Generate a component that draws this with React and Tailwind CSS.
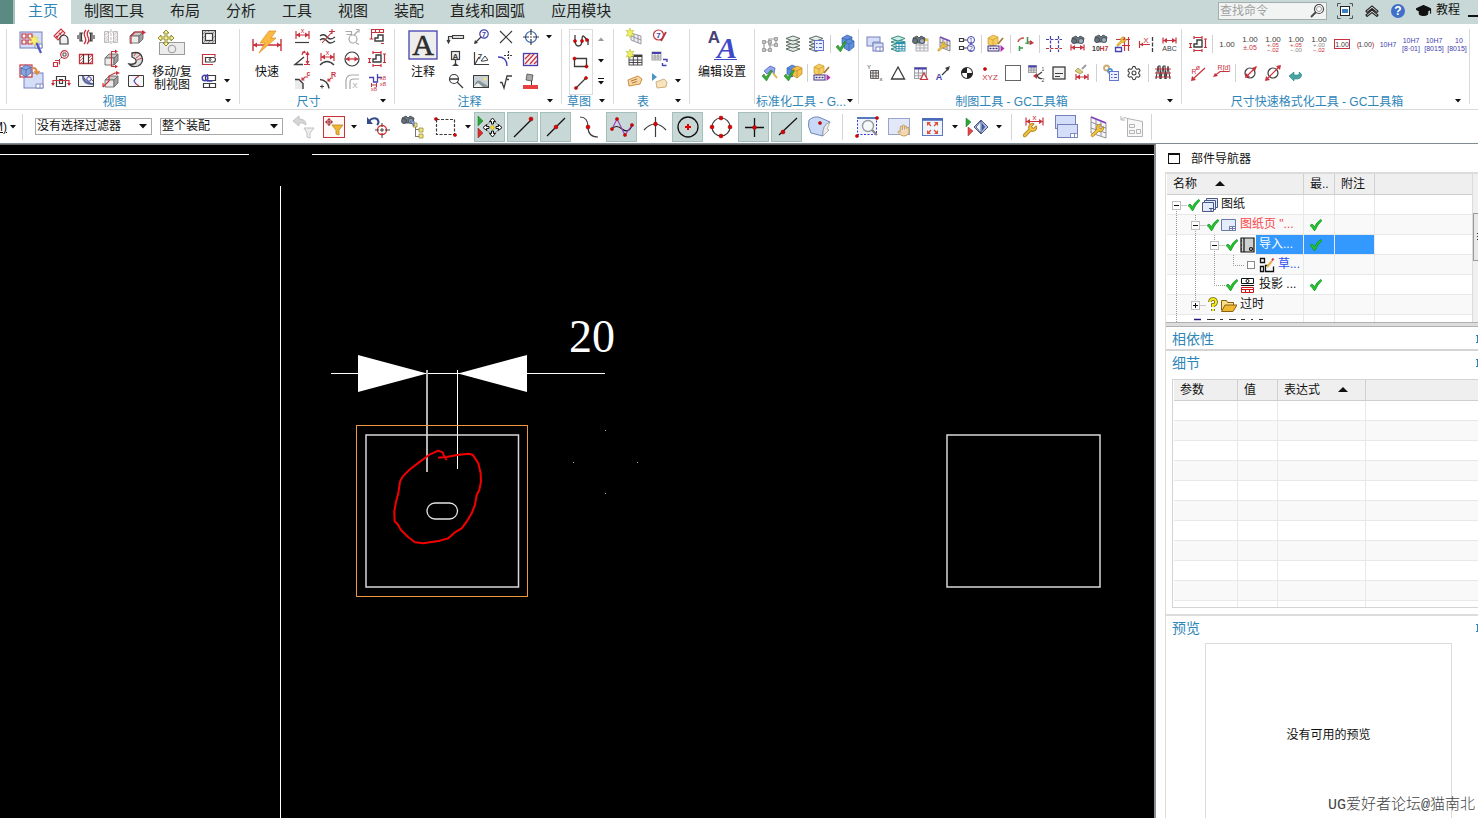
import React, { useState } from 'react';
import { Settings, Wrench, Hand, GraduationCap } from 'lucide-react';

const K = '#3c3c3c';
const R = '#c8323c';
const B = '#4440b0';
const G = '#a8a8a8';

const Dim = ({ x1 = 2, x2 = 18, y = 10, h = 4, w = 1.2 }) => (
    <g stroke={R} strokeWidth={w}>
        <path d={`M${x1} ${y - h}V${y + h}M${x2} ${y - h}V${y + h}M${x1} ${y}H${x2}`} />
        <path fill={R} stroke="none" d={`M${x1} ${y}l4 -2.5v5zM${x2} ${y}l-4 -2.5v5z`} />
    </g>
);

const Dot = ({ x, y, r = 1.6 }) => <circle cx={x} cy={y} r={r} fill="#e00000" stroke="#8a1010" strokeWidth=".5" />;

const T = ({ x = 10, y = 10, c = K, s = 8, b, children }) => (
    <text x={x} y={y} fill={c} stroke="none" fontSize={s} fontWeight={b ? 700 : 400} textAnchor="middle" fontFamily="Liberation Sans, sans-serif">
        {children}
    </text>
);

const Bino = ({ x = 0, y = 0 }) => (
    <g transform={`translate(${x} ${y})`} stroke="#3b444c" strokeWidth=".8">
        <path fill="#6d767e" d="M1 2l4-2 2 2 2-2 4 2-1 5H2z" />
        <circle cx="3" cy="5" r="2.5" fill="#69737b" />
        <circle cx="10" cy="5" r="2.5" fill="#9fb0ba" />
    </g>
);

const Check = ({ x = 0, y = 0 }) => (
    <path transform={`translate(${x} ${y})`} fill="#3aa83a" stroke="#1b7a1b" strokeWidth=".5" d="M0 6l2-2 2 3 5-7 1.500 1-6 10z" />
);

const Grid = ({ x, y, w, h, c = '#999', head = B }) => (
    <g transform={`translate(${x} ${y})`} stroke={c} strokeWidth=".9">
        <rect width={w} height={h} fill="#f5f5fb" />
        <path d={`M0 ${h * 0.5}H${w}M0 ${h * 0.75}H${w}M${w / 3} 0V${h}M${(w * 2) / 3} 0V${h}`} />
        <path stroke={head} strokeWidth="2" d={`M0 1H${w}`} />
    </g>
);

const Sheet = ({ x, y, w, h }) => (
    <g transform={`translate(${x} ${y})`}>
        <rect width={w} height={h} fill="#d5def8" stroke="#7480bc" strokeWidth="1" />
        <path stroke="#7480bc" strokeWidth=".9" fill="#fff" d={`M${w - 7} ${h - 4}h7v4h-7zM${w - 3} ${h - 4}v4`} />
    </g>
);

const Spanner = ({ x, y, s = 12 }) => (
    <Wrench x={x} y={y} width={s} height={s} fill="#f2c53a" stroke="#b88a28" strokeWidth={1.6} />
);

const Cube = ({ x = 0, y = 0, c = '#5f8fdc', d = '#3a62ac' }) => (
    <g transform={`translate(${x} ${y})`} stroke={d} strokeWidth=".7">
        <path fill={c} d="M0 3l5-3 5 2v6l-5 4-5-3z" />
        <path d="M0 3l5 2 5-3M5 5v7" />
    </g>
);

const Part3d = () => (
    <g stroke="#6a6a6a" strokeWidth=".9">
        <path fill="#c8c8c8" d="M4 9l4-4h9l-4 4z" />
        <path fill="#ececec" d="M4 9h9v7H4z" />
        <path fill="#a0a0a0" d="M13 9l4-4v7l-4 4z" />
    </g>
);

const Sheaf = ({ c = '#4f5a55', f = '#e4ede6' }) => (
    <g stroke={c} fill={f} strokeWidth=".9">
        <path d="M3 15l7-2.500 7 2.500-7 2.500z" />
        <path d="M3 11.500l7-2.500 7 2.500-7 2.500z" />
        <path d="M3 8l7-2.500L17 8l-7 2.500z" />
        <path d="M3 4.500L10 2l7 2.500L10 7z" />
    </g>
);

const BaseDim = () => (
    <g>
        <path stroke={K} strokeWidth="1.4" d="M6 13v-3h3V6h5v7z" />
        <path stroke={R} strokeWidth="1.200" d="M6 3.500h8M6 2v3M14 2v3M6 16.500h8M6 15v3M14 15v3M2.500 9.500v4M1 9.500h3M1 13.500h3M17.500 5v8.500M16 5h3M16 13.500h3" />
    </g>
);

const Pack = () => (
    <g>
        <Cube x={2} y={1} c="#f4cc60" d="#c89a30" />
        <path stroke="#a87a3a" strokeWidth="1.800" d="M17 4l-5 6" />
        <rect x="2" y="12" width="11" height="5" stroke="#3a2878" fill="#fff" />
        <path stroke="#3a2878" strokeWidth="1.500" strokeDasharray="2 1" d="M3.500 14.500h8" />
        <path fill="#b030b0" stroke="none" d="M14.500 11l4 3.500-4 3.500z" />
    </g>
);

const Star = ({ x = 0, y = 0 }) => (
    <path transform={`translate(${x} ${y})`} fill="#eef060" stroke="#b8c038" strokeWidth=".6" d="M5 0l1 3 3-1-2 3 2 2-3 .5L5 10 4 7.500 1 8l2-3-2-3 3 1z" />
);

const icons = {
    // view group
    newView: (
        <>
            <Sheet x={1} y={2} w={22} h={16} />
            <path stroke={R} fill="#fff" strokeWidth="1.200" d="M3 4h4v4H3zM9 4h4v4H9zM3 10h4v4H3zM9 10h4v4H9z" />
            <path stroke="#5058c0" strokeWidth="2.200" d="M17 12l5 11" />
            <path fill="#f6f070" stroke="#dccc40" strokeWidth=".5" d="M15 5l1.500 3 3-1-2 3 3 2-3.500.5-1 3.500-2-3.500-3.500.5 2.500-3-2.500-3 3.500 1z" />
        </>
    ),
    baseView: (
        <>
            <Sheet x={5} y={9} w={19} h={15} />
            <rect x="1" y="1" width="12" height="12" fill="#fff" stroke={R} strokeWidth="1.200" />
            <Cube x={2} y={1} c="#8aa4de" />
            <path stroke="#e08a40" strokeWidth="1.800" d="M14 4q4 0 4 5M15.500 7l2.500 3 2.500-3" />
        </>
    ),
    projView: (
        <>
            <path stroke={R} strokeWidth="1.100" d="M3 9l7-7 4 4-7 7zM5 11l7-7M5 9l2 2M8 6l2 2" />
            <path fill="#f0f0f0" stroke={K} strokeWidth="1.200" d="M9 17v-6q1-3 4-3 4 1 4 5v4z" />
        </>
    ),
    detail: (
        <>
            <circle cx="13.500" cy="5.500" r="3.800" stroke={R} strokeWidth="1.200" />
            <path stroke={K} strokeWidth=".9" d="M12 4h3v3h-3z" />
            <path stroke={K} strokeDasharray="2 1" d="M11 8l-4 4" />
            <path stroke={R} strokeWidth="1.200" d="M2.500 13.500h4v4h-4zM4 11.500h4.500v4" />
        </>
    ),
    section: (
        <>
            <path stroke={K} strokeWidth="1.200" d="M5.500 5.500h9v10h-9zM8.500 8.500h3v4h-3z" />
            <path stroke={R} strokeWidth="1.200" d="M2 14v-4.500h16V14" />
            <path fill={R} stroke="none" d="M0 12h4l-2 3zM16 12h4l-2 3z" />
        </>
    ),
    breakView: (
        <>
            <path stroke={K} strokeWidth="1.200" d="M7 6H4v8h3M2 8v4M13 6h3v8h-3M18 8v4M5.500 6v8M14.500 6v8" />
            <path stroke={R} strokeWidth="1.300" d="M10 3q-3 3-1 7t-1 7M13 3q-3 3-1 7t-1 7" />
        </>
    ),
    halfSec: (
        <>
            <path stroke={R} strokeWidth="1.300" d="M3.500 5.500h13v9h-13z" />
            <path stroke={R} strokeWidth=".8" d="M4 9l3-3M4 12l3-3M5 14l2-2M13 9l3-3M13 12l3-3M14 14l2-2" />
            <path stroke={K} strokeWidth="1.200" d="M7.500 5v10M12.500 5v10" />
        </>
    ),
    breakout: (
        <>
            <path stroke={K} fill="#f2f2f2" d="M2.500 4.500h15v11h-15z" />
            <path stroke="#5a68a8" strokeWidth="2.200" d="M7 5q0 8 10 8" />
            <path stroke={K} strokeWidth=".8" d="M8 7l7 6M12 5l5 5" />
            <circle cx="13" cy="8" r="2.200" fill="#fff" stroke={B} />
        </>
    ),
    revolved: (
        <g stroke="#bdbdbd">
            <path fill="#ececec" d="M3.500 4.500h4v11h-4zM12.500 4.500h4v11h-4z" />
            <path stroke="#dfbcc2" strokeWidth=".8" d="M4 8l3-3M4 12l3-3M4 15l3-3M13 8l3-3M13 12l3-3M13 15l3-3" />
            <path d="M7 5h6M7 15h6M10 2v16" strokeDasharray="3 1" />
        </g>
    ),
    cutA: (
        <>
            <Part3d />
            <path stroke={R} strokeWidth="1.200" d="M10.500 18V2.500M10 2.500h5M10 17.500h5" />
            <path fill={R} stroke="none" d="M14 .5l3 2-3 2zM14 15.500l3 2-3 2z" />
        </>
    ),
    cutB: (
        <>
            <Part3d />
            <path stroke={R} strokeWidth="1.200" d="M2 16l6-6V5l6-3h3M2 16v-4" />
            <path fill={R} stroke="none" d="M15 0l4 2-4 2z" />
        </>
    ),
    cutC: (
        <>
            <Part3d />
            <path stroke={R} strokeWidth="1.200" d="M5 17V9l4-4h9" />
            <path fill={R} stroke="none" d="M16 3l4 2.500-4 2.500z" />
        </>
    ),
    isoCut: (
        <>
            <path stroke={K} strokeWidth="1.300" fill="#ddd" d="M6 4q8-2 10 4t-4 9q-6 2-9-2 6 1 7-2t-4-5z" />
            <path stroke={R} strokeWidth=".9" d="M10 4L8 7M14 6l-4 3M16 9l-5 2" />
        </>
    ),
    chevView: (
        <>
            <path stroke={K} fill="#f6f6f6" d="M2.500 4.500h15v11h-15z" />
            <path stroke={R} strokeWidth="1.200" d="M13 5l-3 2M13 15l-3-2" />
            <path stroke={B} strokeWidth="1.200" d="M10 7l-2 3 2 3" />
        </>
    ),
    move: (
        <>
            <rect x="1.500" y="12.500" width="25" height="12" fill="#ececec" stroke="#9a9a9a" />
            <circle cx="14" cy="19" r="3.800" stroke="#999" />
            <path fill="#f6f090" stroke="#86802c" strokeWidth=".9" d="M8 0l3 3H9v4h4V5l3 3-3 3V9H9v4h2l-3 3-3-3h2V9H3v2L0 8l3-3v2h4V3H5z" />
        </>
    ),
    frame: (
        <>
            <rect x="3.500" y="3.500" width="13" height="13" stroke={K} fill="#d4d4d4" />
            <path stroke="#777" strokeWidth=".7" d="M4 7l3-3M4 16l3-3M13 7l3-3M13 16l3-3M4 11l2-2M14 11l2-2M9 5l1-1M9 16l2-2" />
            <rect x="6.500" y="6.500" width="7" height="7" stroke={K} fill="#fff" strokeWidth="1.200" />
        </>
    ),
    update: (
        <>
            <path stroke={R} strokeWidth="1.200" d="M16 8V5.500H3.500v10H14" />
            <path stroke={K} strokeWidth="1.200" fill="#fff" d="M6.500 8.500h8q2 0 2 2t-2 2.500h-8z" />
            <circle cx="11" cy="10.500" r="1" stroke={K} />
        </>
    ),
    align: (
        <>
            <path stroke={K} strokeWidth="1.200" d="M6.500 4.500h10v5h-10zM4.500 12.500h12v4h-12zM10.500 12v5" />
            <circle cx="6" cy="7" r="2.800" stroke={B} strokeWidth="1.500" />
            <path stroke={B} strokeWidth="1.300" d="M8.500 3v7h5" />
        </>
    ),
    // dimension group
    rapid: (
        <>
            <Dim x1={1} x2={29} y={15} h={6} w={1.4} />
            <path fill="#fab940" stroke="#dc8820" strokeWidth=".7" d="M17 1h7l-5 7h5L7 23l6-10H8z" />
        </>
    ),
    linear: (
        <>
            <Dim x1={4} x2={17} y={8} h={4} />
            <T x={10.5} y={6} c={R} s={7}>x</T>
            <path stroke={K} strokeWidth="1.200" d="M3 15.500h14" />
        </>
    ),
    curveDim: (
        <>
            <path stroke={K} strokeWidth="1.300" d="M3 9q4-3 7 1t8 0M3 13q4-3 7 1t8 0" />
            <path stroke={R} strokeWidth="1.100" d="M5 16L16 4M12 4.500h6M15 2v5" />
        </>
    ),
    dimGray: (
        <g stroke={G} strokeWidth="1.200">
            <circle cx="11" cy="12" r="4" />
            <path d="M3.500 4.500h6v3h-5M12 8l4-4M14 2.500h3v3M14 16l3 1.500" />
        </g>
    ),
    ordinate: (
        <>
            <path stroke={K} strokeWidth="1.400" d="M8 14v-3h3V8h5v6z" />
            <path stroke={R} strokeWidth="1.100" d="M4.500 2.500h12v3h-12zM8.500 2.500v3M12.500 2.500v3M4.500 5.500V12M2.500 12h4M14 16.500h3" />
        </>
    ),
    angular: (
        <>
            <path stroke={K} strokeWidth="1.400" d="M12 8l-9 7.500h8" />
            <path stroke={R} strokeWidth="1.200" d="M15.500 4v11M12 15.500h6M11 4l2-2M10 6l1-3 3 1" />
            <path fill={R} stroke="none" d="M13.500 6h4l-2-4zM13.500 12h4l-2 3.500z" />
        </>
    ),
    chord: (
        <>
            <path stroke={K} strokeWidth="1.400" d="M3 16q7-7 14 0" />
            <Dim x1={4} x2={17} y={8} h={4} />
            <T x={10.5} y={6} c={R} s={7}>x</T>
        </>
    ),
    diameter: (
        <>
            <circle cx="10" cy="10" r="7" stroke={K} strokeWidth="1.200" />
            <path stroke={R} strokeWidth="1.300" d="M4 10h12" />
            <path fill={R} stroke="none" d="M3.500 10l4-2.500v5zM16.500 10l-4-2.500v5z" />
        </>
    ),
    baseDim: <BaseDim />,
    chamfer: (
        <>
            <path fill="#ebebeb" stroke="none" d="M3 9h4l4 4v5H3z" />
            <path stroke={K} strokeWidth="1.400" d="M3 8.500h4l4 4V18" />
            <path stroke={R} strokeWidth="1.100" d="M10 9l3-3h3M10 6.500V9h2.500" />
            <T x={16.5} y={5} c={R} s={7} b>c</T>
        </>
    ),
    radius: (
        <>
            <path stroke={K} strokeWidth="1.400" d="M3 8.500q8 1 9 9" />
            <path stroke={K} d="M3 15.500h4M5 13.500v4" />
            <path stroke={R} strokeWidth="1.100" d="M11 10l3-3h2M11 7.500V10h2.500" />
            <T x={16.5} y={6} c={R} s={7} b>R</T>
        </>
    ),
    thick: (
        <g stroke={G} strokeWidth="1.200">
            <path d="M4 18V9q1-5 6-5h7M8 18v-7q0-3 4-3h5" />
            <T x={13} y={17} c={G} s={8}>X</T>
        </g>
    ),
    arcLen: (
        <>
            <path stroke={B} strokeWidth="1.300" d="M2 6.500h5M6.500 6v5h4V3M10 6.500h5" />
            <path stroke={R} d="M4.500 12v4M9.500 12v4M4.500 14h5" />
            <T x={16} y={9} c={R} s={6}>x8</T>
            <T x={16} y={15} c={R} s={6}>x8</T>
            <T x={7} y={20} c={R} s={6}>x8</T>
        </>
    ),
    // annotation group
    note: (
        <>
            <rect x="1" y="1" width="28" height="28" fill="#ededed" stroke={B} strokeWidth="1.300" />
            <text x="15" y="25" fill="#2c2c2c" stroke="#2c2c2c" strokeWidth=".6" fontSize="30" textAnchor="middle" fontFamily="Liberation Serif, serif">A</text>
        </>
    ),
    gdt: <path stroke={K} strokeWidth="1.200" fill="#ddd" d="M6.500 8.500h11v3h-11zM2.500 15V9.500h4M1 13l1.500 3L4 13" />,
    balloon: (
        <>
            <circle cx="13" cy="7" r="4.200" stroke={B} strokeWidth="1.200" fill="#fff" />
            <T x={13} y={9.5} c={B} s={7} b>7</T>
            <path stroke={K} strokeWidth="1.200" d="M10 10l-6 6" />
            <path fill={K} stroke="none" d="M3 17l1-4 3 3z" />
        </>
    ),
    cross: <path stroke={K} strokeWidth="1.200" d="M4 4l12 12M16 4L4 16" />,
    target: (
        <>
            <circle cx="10" cy="10" r="5.500" stroke="#2a5fb0" strokeWidth="1.200" />
            <path stroke={K} strokeWidth="1.200" d="M10 2v6M10 12v6M2 10h6M12 10h6M9 10h2" />
        </>
    ),
    datum: (
        <>
            <rect x="5.500" y="2.500" width="8" height="8" stroke={K} strokeWidth="1.200" fill="#eee" />
            <T x={9.5} y={9.5} s={8} b>A</T>
            <path stroke={K} strokeWidth="1.300" d="M9.500 11v5" />
            <path fill={K} stroke="none" d="M6 17l3.500-3 3.500 3z" />
        </>
    ),
    surface: (
        <>
            <path stroke={K} strokeWidth="1.200" d="M3.500 3v12.500H18M4 15l4-7" />
            <T x={9} y={10} s={8} b>7</T>
            <path stroke={K} d="M10 12l4-5 3 4-4 1z" />
        </>
    ),
    offsetC: (
        <>
            <path stroke={B} strokeWidth="1.300" d="M2 8q9 0 9 9" />
            <path stroke={K} strokeDasharray="2 1" strokeWidth="1.200" d="M12.500 2v9M8 6.500h9" />
        </>
    ),
    hatch: (
        <>
            <rect x="2.500" y="4.500" width="14" height="12" stroke={B} strokeWidth="1.300" fill="#fdf0f0" />
            <path stroke={R} strokeWidth="1.200" d="M4 10l5-5M4 15l9-10M9 15l7-8M13 15l3-3" />
        </>
    ),
    zoomSym: (
        <>
            <circle cx="8" cy="8" r="4.500" stroke={K} strokeWidth="1.200" />
            <path stroke={K} strokeWidth="1.300" d="M4 8h8M11 11l6 6" />
        </>
    ),
    image: (
        <>
            <rect x="2.500" y="4.500" width="15" height="12" stroke={K} fill="#c6d0d4" />
            <path fill="#8a969a" stroke="none" d="M3 15q3-7 6-5t8 5v1H3z" />
            <path fill="#eef2f4" stroke="none" d="M3 15l4-3 5 4H3z" />
            <circle cx="14" cy="8" r="1.500" fill="#f8e878" stroke="none" />
        </>
    ),
    rough: <path stroke={K} strokeWidth="1.300" d="M4 11.500h2l2 5.500 3-12h5M11 8.500h2" />,
    paint: (
        <>
            <path fill="#a8a8a8" stroke={K} strokeWidth=".7" d="M6 3l6 1-1 6-6-1z" />
            <path stroke={K} d="M10.500 10v4" />
            <path fill="#e84040" stroke="none" d="M2 14h15v4H2z" />
        </>
    ),
    // sketch
    spline: (
        <>
            <path stroke={K} strokeWidth="1.300" d="M4 4v5q0 6 3.500 6t3.500-6 2.500-3 3.500 3v5" />
            <Dot x={4} y={10} /><Dot x={11} y={10} /><Dot x={16} y={9} />
        </>
    ),
    rect: (
        <>
            <path stroke={K} strokeWidth="1.300" d="M3.500 6.500h12v8h-12z" />
            <Dot x={3.5} y={6.5} /><Dot x={15.5} y={14.5} />
        </>
    ),
    line: (
        <>
            <path stroke={K} strokeWidth="1.300" d="M5 15L15 5" />
            <Dot x={5} y={15} /><Dot x={15} y={5} />
        </>
    ),
    // tables
    tabNote: (<><path fill="#f0eef8" stroke="#888" strokeWidth=".8" d="M6 6l10 3v8L6 13zM9 7v7M13 8v8M6 9l10 4" /><Star x={0} y={1} /></>),
    tabBalloon: (
        <>
            <circle cx="8.500" cy="8" r="5" stroke={R} strokeWidth="1.200" />
            <T x={8.5} y={11} c={B} s={8} b>7</T>
            <path stroke="#b03a44" strokeWidth="1.800" d="M16 5l-5 9" />
        </>
    ),
    partsList: (<><Grid x={4} y={6} w={13} h={10} c={K} head={K} /><Star x={0} y={0} /></>),
    tabLink: (
        <>
            <Grid x={2} y={3} w={9} h={8} />
            <path stroke={B} strokeWidth="1.400" d="M13 10.500h4V13M12.500 17v-3M12.500 16.500h4" />
        </>
    ),
    tag: (
        <>
            <path fill="#f8d4a0" stroke="#cc9040" d="M3 9l10-4 4 3-2 5-11 2z" />
            <path stroke="#9a6428" strokeWidth=".8" d="M6 10l6-2M7 12l5-1.500" />
        </>
    ),
    tagPlay: (
        <>
            <path fill="#4a96c0" stroke="none" d="M2 2l5 4-5 4z" />
            <path fill="#f6e4c0" stroke="#d0b078" d="M6 11l8-3 3 3-1 5-9 1z" />
        </>
    ),
    editStyle: (
        <>
            <T x={7} y={13} c="#4a3f78" s={17} b>A</T>
            <text x="20" y="28" fill="#3f49c8" stroke="none" fontSize="30" fontWeight="700" fontStyle="italic" textAnchor="middle" fontFamily="Liberation Serif, serif">A</text>
            <path stroke="#3f49c8" d="M7 29.500h23" />
        </>
    ),
    // standardisation
    boxesGray: (
        <g stroke="#9a9a9a" strokeWidth="1.200">
            <path d="M4 8h6v8H4zM9 5h7v6H9z" />
            <path fill="#c4c4c4" strokeWidth=".9" d="M2.500 6.500h3v3h-3zM8.500 6.500h3v3h-3zM2.500 14.500h3v3h-3zM8.500 14.500h3v3h-3zM14.500 3.500h3v3h-3zM14.500 9.500h3v3h-3z" />
        </g>
    ),
    layers: <Sheaf />,
    layerSet: (
        <>
            <Sheaf />
            <rect x="8.500" y="6.500" width="9" height="10" fill="#eaf0ff" stroke="#6474d0" />
            <path stroke="#5264c8" d="M10 9.500h1.500M13 9.500h3M10 13.500h1.500M13 13.500h3" />
        </>
    ),
    chkBlue: (<><Cube x={7} y={1} /><Cube x={9} y={5} /><Check x={1} y={7} /></>),
    chkGreen: (
        <>
            <path fill="#94a6ee" stroke="#4858b8" strokeWidth=".7" d="M4 8l6-5 5 2-1 6-3-4-4 4z" />
            <path stroke="#d0b840" strokeWidth="1.800" d="M13 10l4 5" />
            <Check x={2} y={7} />
        </>
    ),
    chkGold: (<><Cube x={4} y={2} /><Cube x={9} y={3} c="#f6c04a" d="#b88828" /><Check x={1} y={7} /></>),
    pack: <Pack />,
    // drafting tools
    sheets: (<><Sheet x={2} y={3} w={13} h={9} /><Sheet x={8} y={9} w={10} h={8} /></>),
    layerTab: (<><Sheaf c="#2a8070" f="#c9eee6" /><Grid x={8} y={8} w={9} h={9} c="#2a90a8" head="#2a90a8" /></>),
    findTab: (<><Grid x={5} y={5} w={12} h={12} c="#aaa" head="#e8c030" /><Bino x={1} y={2} /></>),
    editTab: (
        <>
            <path fill="#ece8f6" stroke="#777" strokeWidth=".9" d="M6 3l10 4v10L6 13zM9 5v9M13 6v9M6 8l10 4" />
            <path stroke="#7850b8" strokeWidth="1.500" d="M6 3l10 4" />
            <Spanner x={3} y={7} s={11} />
        </>
    ),
    oneTwo: (
        <>
            <path stroke={K} strokeWidth="1.200" d="M2.500 4.500h4v3h-4zM2.500 12.500h4v3h-4zM6 6h4M6 14h4" />
            <circle cx="14" cy="6" r="3.500" stroke={B} /><circle cx="14" cy="14" r="3.500" stroke={B} />
            <T x={14} y={8.5} c={B} s={7}>1</T><T x={14} y={16.5} c={B} s={7}>2</T>
        </>
    ),
    axes: (
        <>
            <path stroke="#d05050" strokeWidth="1.500" d="M3 8q1-4 6-4M13 8h4" />
            <path fill={R} stroke="none" d="M15 6l4 3-4 2z" />
            <path stroke="#3a9a4a" strokeWidth="1.600" d="M12.500 3v6M4.500 17v-5M4 14h4" />
            <path stroke="#3a9a4a" strokeWidth="1" d="M10 9l5 1" />
        </>
    ),
    centre: (
        <g strokeWidth="1.200">
            <path stroke={B} strokeDasharray="3 1.500" d="M6.500 2v16M14.500 2v16M2 5.500h16" />
            <path stroke={R} strokeDasharray="3 1.500" d="M2 14.500h16" />
        </g>
    ),
    findDim: (<><Bino x={4} y={2} /><Dim x1={4} x2={17} y={13.5} h={3} /></>),
    findTol: (
        <>
            <Bino x={4} y={1} />
            <T x={6} y={17} s={7} b>10</T><T x={14} y={17} c={R} s={7} b>H7</T>
        </>
    ),
    editDim: (
        <>
            <path stroke={R} strokeWidth="1.200" d="M3 5.500h14M9 11.500h8M15.500 3v14M11.500 3v14" />
            <Spanner x={3} y={2} s={11} />
            <path stroke={B} strokeWidth="1.300" fill="#fff" d="M2.500 13.500h6v4h-6z" />
        </>
    ),
    xDim: (
        <>
            <path stroke={R} strokeWidth="1.200" d="M3.500 7v7M3.500 10.500H14" />
            <path fill={R} stroke="none" d="M4 10.500l3-2v4z" />
            <T x={10} y={9} c={R} s={8}>X</T>
            <path stroke={K} strokeDasharray="4 1.500" strokeWidth="1.300" d="M16.500 3v15" />
        </>
    ),
    abcDim: (<><Dim x1={4} x2={17} y={6.5} h={3} /><T x={10.5} y={17} s={7}>ABC</T></>),
    gridXY: (
        <>
            <path stroke="#555" strokeWidth=".9" fill="#f0e4e4" d="M5.500 7.500h8v8h-8zM5.500 10h8M5.500 13h8M8 7.500v8M11 7.500v8" />
            <T x={4} y={6} s={6}>Y</T><T x={16} y={18} s={6}>x</T>
        </>
    ),
    triangle: <path stroke={K} strokeWidth="1.300" d="M10 4l6.500 12h-13z" />,
    gridTri: (
        <>
            <Grid x={3.5} y={4.5} w={12} h={11} />
            <path stroke={R} fill="#fff" strokeWidth="1.200" d="M13 10l3.500 6.500h-7z" />
        </>
    ),
    arrowA: (
        <>
            <T x={5} y={17} c={B} s={9} b>A</T>
            <path stroke={K} strokeWidth="1.200" d="M8 12l7-7" />
            <path fill={K} stroke="none" d="M16 3l-5 2 3 3z" />
        </>
    ),
    cog: (
        <>
            <circle cx="10" cy="10" r="5.500" fill="#fff" stroke={K} strokeWidth="1.200" />
            <path fill="#222" stroke="none" d="M10 10V4.500a5.500 5.500 0 0 0-5.500 5.500zM10 10v5.500a5.500 5.500 0 0 0 5.500-5.500z" />
        </>
    ),
    xyz: (<><Dot x={5} y={6} /><T x={10} y={17} c={R} s={8}>XYZ</T></>),
    square: <rect x="2.500" y="2.500" width="15" height="15" stroke="#666" />,
    gridC: (
        <>
            <Grid x={2.5} y={2.5} w={8} h={7} />
            <path fill={R} stroke="none" d="M7 13l4-3v6z" />
            <path stroke={K} strokeWidth="1.200" d="M16 9l-5 3.500q2 4 5 3" />
            <T x={17} y={8} s={5}>1</T><T x={17} y={19} s={5}>2</T>
        </>
    ),
    noteBox: (
        <>
            <rect x="4" y="4" width="12" height="12" fill="#f1f1f1" stroke={K} strokeWidth="1.300" />
            <path stroke={K} d="M6 10.500h8M6 13.500h5" />
        </>
    ),
    brushDim: (
        <>
            <path fill="#dcd080" stroke="#9a8c48" strokeWidth=".7" d="M6 5l5 4-3 2-5-3z" />
            <path stroke="#999" strokeWidth="1.800" d="M10 6l4-4" />
            <Dim x1={4} x2={16} y={14} h={3} />
        </>
    ),
    gearsSet: (
        <>
            <circle cx="5.500" cy="5" r="2.500" stroke="#d0a870" strokeWidth="1.800" />
            <circle cx="9" cy="8" r="2" stroke="#4a98cc" strokeWidth="1.800" />
            <rect x="8.500" y="8.500" width="9" height="9" fill="#eaf0ff" stroke="#6474d0" />
            <path stroke="#5264c8" d="M10 11.500h1.500M13 11.500h3M10 14.500h1.500M13 14.500h3" />
        </>
    ),
    gear: <Settings x={2} y={2} width={16} height={16} stroke={K} strokeWidth={1.6} />,
    spring: (
        <>
            <path stroke={K} strokeWidth="1.100" d="M3 16l2-13 2 13M8 16l2-13 2 13M13 16l2-13 2 13M5 3h2l1 13M10 3h2l1 13" />
            <path stroke={R} strokeWidth="1.200" d="M2 6h16M2 10h16M2 14h16" />
        </>
    ),
    // quick dimension formats
    f1: <T y={13} s={8}>1.00</T>,
    f2: (<><T y={8} s={8}>1.00</T><T y={16} s={7} c={R}>±.05</T></>),
    f3: (<><T y={8} s={8}>1.00</T><T y={13} s={6} c={R}>+.05</T><T y={18} s={6} c={R}>−.02</T></>),
    f4: (<><T y={8} s={8}>1.00</T><T y={13} s={6} c={R}>+.05</T><T y={18} s={6} c="#888">−.00</T></>),
    f5: (<><T y={8} s={8}>1.00</T><T y={13} s={6} c="#888">+.00</T><T y={18} s={6} c={R}>−.02</T></>),
    f6: (<><rect x="2.500" y="5.500" width="15" height="9" stroke={R} /><T y={13} s={7}>1.00</T></>),
    f7: (<><T x={3} y={13} s={8} c={R}>(</T><T y={13} s={7}>1.00</T><T x={18} y={13} s={8} c={R}>)</T></>),
    f8: <T y={13} s={7} c={B}>10H7</T>,
    f9: (<><T y={9} s={7} c={B}>10H7</T><T y={17} s={7} c={B}>[8·01]</T></>),
    f10: (<><T y={9} s={7} c={B}>10H7</T><T y={17} s={7} c={B}>[8015]</T></>),
    f11: (<><T x={12} y={9} s={7} c={B}>10</T><T y={17} s={7} c={B}>[8015]</T></>),
    rPhi: (
        <>
            <path stroke={R} strokeWidth="1.200" d="M17 5L5 16" />
            <path fill={R} stroke="none" d="M3 18l1-5 4 4z" />
            <T x={6} y={11} c={R} s={7}>R</T><T x={10} y={7} c={R} s={7}>ø</T>
        </>
    ),
    rD: (
        <>
            <path stroke={R} strokeWidth="1.200" d="M18 8.500H9l-5 4" />
            <path fill={R} stroke="none" d="M2 14l2-4 3 3z" />
            <T x={13} y={7} c={R} s={7}>R[d]</T>
        </>
    ),
    dia1: (
        <>
            <circle cx="10" cy="10" r="5" stroke={K} strokeWidth="1.200" />
            <path stroke={R} strokeWidth="1.200" d="M7 13l9-9" />
            <path fill={R} stroke="none" d="M5 15l1-5 4 4zM17 3l-5 2 3 3z" />
        </>
    ),
    dia2: (
        <>
            <circle cx="10" cy="10" r="5" stroke={K} strokeWidth="1.200" />
            <path stroke={R} strokeWidth="1.200" d="M4 16L16 4" />
            <path fill={R} stroke="none" d="M2 18l1-5 4 4zM18 2l-5 1 4 4z" />
        </>
    ),
    back: <path fill="#48a4a4" stroke="#2c8080" strokeWidth=".6" d="M3 13l5-4v3h4q2-1 1-3 4 2 2 5-1 2-4 2H8v2z" />,
    // selection bar, drawn on a 24 grid
    undoFilter: (
        <g fill="#d6d6d6" stroke="#c2c2c2">
            <path d="M1 6l6-5v3q7 0 7 6-3-3-7-2v3z" />
            <path d="M12 13h10l-4 5v5l-3-1v-4z" fill="#ededed" />
        </g>
    ),
    filter: (
        <>
            <rect x="1.500" y="1.500" width="21" height="21" stroke={R} fill="#fff8f4" />
            <circle cx="7" cy="7" r="2.500" stroke={R} />
            <path stroke="#8a2028" d="M7 3v8M3 7h8" />
            <path fill="#f2b632" stroke="#b88420" strokeWidth=".8" d="M10 10h11l-4 5v5l-3-1v-4z" />
        </>
    ),
    reset: (
        <>
            <path stroke="#334a88" strokeWidth="2" d="M3 6q4-4 8-2 3 3 0 6" />
            <path fill="#334a88" stroke="none" d="M1 2v7h6z" />
            <circle cx="16" cy="15" r="4.500" stroke="#e03030" strokeWidth="1.300" />
            <path stroke={K} d="M16 8v4M16 18v5M9 15h4M19 15h5M14 15h4M16 13v4" />
        </>
    ),
    findTree: (
        <>
            <Bino x={1} y={1} />
            <path stroke="#777" d="M15.500 10v12M15 14.500h4M15 21.500h4" />
            <path fill="#f4e478" stroke="#9a8a40" strokeWidth=".8" d="M13 8h4v4h-4zM19 13h4v4h-4zM19 19h4v4h-4z" />
            <path fill="#a0b8e8" stroke="#445a9a" strokeWidth=".8" d="M10 6h4v5z" />
        </>
    ),
    lasso: (
        <>
            <path stroke={K} strokeDasharray="3 1.500" strokeWidth="1.200" d="M3.500 4.500h18v15h-18z" />
            <Dot x={3} y={4} /><Dot x={22} y={20} />
        </>
    ),
    snap: (
        <>
            <path fill="#28a838" stroke="#147020" strokeWidth=".5" d="M0 1l5 5-5 5z" />
            <path fill="#d83030" stroke="#901010" strokeWidth=".5" d="M0 13l5 5-5 5z" />
            <circle cx="14.500" cy="12.500" r="6" stroke="#888" />
            <path fill="#fff" stroke="#111" strokeWidth="1" d="M14.500 3l3 3.500h-2V9h-2V6.500h-2zM14.500 22l3-3.500h-2V16h-2v2.500h-2zM5 12.500l3.500-3v2H11v2H8.500v2zM24 12.500l-3.500-3v2H18v2h2.500v2z" />
            <circle cx="14.500" cy="12.500" r="1.800" fill="#f8dc20" stroke="#d0a818" strokeWidth=".6" />
        </>
    ),
    endPt: (<><path stroke="#111" strokeWidth="1.200" d="M3 22L20 5" /><Dot x={20} y={4} r={2} /></>),
    midPt: (<><path stroke="#111" strokeWidth="1.200" d="M3 21L21 3" /><Dot x={12} y={12} r={2} /></>),
    ctrlPt: (<><path stroke={K} strokeWidth="1.200" d="M3 2q8 0 8 10t10 10" /><Dot x={11} y={12} r={2} /></>),
    pole: (
        <>
            <path stroke="#111" strokeWidth="1.200" d="M2 14q4-5 10 0t10-3" />
            <path stroke="#a040c0" strokeWidth="1.200" d="M2 14l5-10 8 16 7-10" />
            <Dot x={2} y={14} /><Dot x={7} y={4} /><Dot x={15} y={20} /><Dot x={22} y={10} />
        </>
    ),
    isect: (<><path stroke={K} strokeWidth="1.200" d="M1 15q11-12 22 0M12.500 2v20" /><Dot x={12.5} y={9} r={2} /></>),
    arcCtr: (
        <>
            <circle cx="12" cy="12" r="10" stroke="#111" strokeWidth="1.300" />
            <path stroke="#e00000" strokeWidth="2" d="M12 9v6M9 12h6" />
        </>
    ),
    quad: (
        <>
            <circle cx="12" cy="12" r="9" stroke={K} strokeWidth="1.200" />
            <Dot x={12} y={3} r={2} /><Dot x={21} y={12} r={2} /><Dot x={12} y={21} r={2} /><Dot x={3} y={12} r={2} />
        </>
    ),
    exist: (<><path stroke="#111" strokeWidth="1.300" d="M3 12.500h19M12.500 3v19" /><Dot x={12.5} y={12.5} r={2} /></>),
    onCurve: (<><path stroke="#111" strokeWidth="1.200" d="M4 20L22 3" /><Dot x={8} y={17} r={2} /></>),
    onFace: (
        <>
            <path fill="#c9d8f4" stroke="#6a88b8" d="M1 5q6-5 12-2l9 4q-8 3-7 14L3 18Q-1 11 1 5z" />
            <path fill="#eee" stroke="#999" strokeWidth=".7" d="M15 21q-1-11 7-14-1 3-3 7l2 1z" />
            <Dot x={12} y={8} />
        </>
    ),
    fitSel: (
        <>
            <rect x="2.500" y="3.500" width="19" height="16" fill="#f0f4ff" stroke="#3838e0" strokeDasharray="2 1.500" />
            <path stroke="#5878c0" strokeWidth="2" d="M2 3h19" />
            <circle cx="13" cy="11" r="5.500" fill="#f6f9fa" stroke="#999" strokeWidth="1.400" />
            <path stroke="#888" strokeWidth="2.200" d="M17 15l5 5" />
            <Dot x={2} y={21} /><Dot x={22} y={3} />
        </>
    ),
    pan: (
        <>
            <rect x="1.500" y="3.500" width="21" height="16" fill="#e2e8f8" stroke="#98a4d0" />
            <Hand x={10} y={9} width={13} height={13} fill="#f4d8ac" stroke="#c09a60" strokeWidth={1.8} />
        </>
    ),
    fit: (
        <>
            <rect x="2.500" y="3.500" width="20" height="17" fill="#f0f4ff" stroke="#6078c0" />
            <path stroke="#4868b8" strokeWidth="2.500" d="M2 4.500h21" />
            <path stroke="#d85038" strokeWidth="1.300" d="M11 11L8 8M14 11l3-3M11 15l-3 3M14 15l3 3" />
            <path fill="#d85038" stroke="none" d="M7 7h4L7 11zM18 7h-4l4 4zM7 19h4l-4-4zM18 19h-4l4-4z" />
        </>
    ),
    orient: (
        <>
            <path fill="#28a838" stroke="#147020" strokeWidth=".5" d="M1 3l5 4-5 5z" />
            <path fill="#e04848" stroke="#a02020" strokeWidth=".5" d="M3 12l5 4-5 5z" />
            <path fill="#aebcdc" stroke="#4a588a" d="M9 12l7-7 7 7-7 7z" />
            <path fill="#f0f4fe" stroke="#33437a" strokeWidth=".8" d="M16 6v12l-5-6z" />
            <path fill="#3a5aa8" stroke="none" d="M17 8v8l3-4z" />
        </>
    ),
    wrenchDim: (<><Dim x1={5} x2={22} y={6.5} h={4} /><T x={13.5} y={5} c={R} s={8}>x</T><Spanner x={1} y={7} s={16} /></>),
    twoSheets: (<><Sheet x={1.5} y={0.5} w={20} h={13} /><Sheet x={3.5} y={9.5} w={20} h={13} /></>),
    wrenchTab: (
        <>
            <path fill="#f6f4fc" stroke="#888" strokeWidth=".9" d="M4 2l15 6v15L4 18zM9 4v15M14 6v15M4 7l15 6M4 13l15 5" />
            <path stroke="#8040c0" strokeWidth="1.800" d="M4 2l15 6" />
            <Spanner x={3} y={8} s={15} />
        </>
    ),
    sheetGray: (
        <g stroke="#b4b4b4" fill="#f8f8f8">
            <path d="M7.500 3.500l15 3v15h-15zM9.500 9.500h5v3h-5zM9.500 15.500h5v3h-5zM16.500 14.500h4v4h-4z" />
            <path d="M1 5q3-4 7-1M1 1v4h4" fill="none" />
        </g>
    ),
};

const Icon = ({ name, size = 20 }) => (
    <svg width={size} height={size} viewBox={`0 0 ${size} ${size}`} fill="none" strokeWidth="1" overflow="visible" aria-hidden="true">
        {icons[name]}
    </svg>
);

const Down = ({ className = '' }) => (
    <svg width="6" height="4" viewBox="0 0 6 4" className={className} aria-hidden="true">
        <path d="M0 0h6L3 3.500z" fill="currentColor" />
    </svg>
);

const More = ({ label = '更多' }) => (
    <button aria-label={label} className="w-3 h-[22px] flex items-center justify-center shrink-0">
        <Down />
    </button>
);

const Divider = () => <div className="w-px my-[5px] bg-[#d9d9d9] shrink-0" />;

const Group = ({ title, width, left, children }) => (
    <section className={`flex flex-col shrink-0 pt-[2px] ${width}`}>
        <div className="h-[66px] flex">{children}</div>
        {title && (
            <div className="h-[17px] pr-[5px] flex items-center">
                <span className={`flex-1 pt-[2px] text-[#2e86b8] leading-4 whitespace-nowrap ${left ? 'pl-px' : 'text-center'}`}>{title}</span>
                <button aria-label={`${title} 选项`} className="w-3 h-4 flex items-center justify-center">
                    <Down />
                </button>
            </div>
        )}
    </section>
);

const Column = ({ names }) => (
    <div className="flex flex-col">
        {names.map((n) => (
            <button key={n} aria-label={n} className="w-[25px] h-[22px] flex items-center justify-center">
                <Icon name={n} />
            </button>
        ))}
    </div>
);

// "|" in a row stands for a thin separator
const Row = ({ names }) => (
    <div className="flex h-[29px] items-center">
        {names.map((n, i) =>
            n === '|' ? (
                <div key={i} className="w-[6px] flex justify-center">
                    <div className="w-px h-[18px] bg-[#d0d0d0]" />
                </div>
            ) : (
                <button key={i} aria-label={n} className="w-[23px] h-6 flex items-center justify-center">
                    <Icon name={n} />
                </button>
            )
        )}
    </div>
);

const BigButton = ({ icon, size, width, children }) => (
    <button className={`flex flex-col items-center pt-1 shrink-0 ${width}`}>
        <span className="h-9 flex items-start justify-center">
            <Icon name={icon} size={size} />
        </span>
        <span className="leading-[13px] whitespace-nowrap">{children}</span>
    </button>
);

const tabs = ['主页', '制图工具', '布局', '分析', '工具', '视图', '装配', '直线和圆弧', '应用模块'];

const TopBar = ({ active, onChange }) => (
    <header className="h-6 flex bg-[#c8d8d6]">
        <div className="w-[15px] bg-[#5b8a82] border-r-2 border-[#a9c1bd] shrink-0" />
        <nav className="flex text-[15px]">
            {tabs.map((t) => (
                <button
                    key={t}
                    onClick={() => onChange(t)}
                    className={`px-[13px] h-6 pb-[3px] leading-5 whitespace-nowrap ${t === active ? 'bg-white text-[#2e86b8]' : 'text-[#222]'}`}
                >
                    {t}
                </button>
            ))}
        </nav>
        <div className="ml-auto flex items-start pt-[2px]">
            <label className="w-[109px] h-[18px] flex items-center bg-[#f2f4f4] border border-[#a5adad]">
                <input type="text" aria-label="查找命令" placeholder="查找命令" className="w-0 flex-1 pl-px leading-4 outline-none placeholder:text-[#a0a0a0]" />
                <svg width="18" height="16" viewBox="0 0 18 16" fill="none" stroke="#444" strokeWidth="1.200" aria-hidden="true">
                    <circle cx="11" cy="6" r="4.500" fill="#fff" />
                    <circle cx="11" cy="6" r="2.500" stroke="#999" strokeWidth="1" />
                    <path d="M8 9l-5 5" strokeWidth="1.800" />
                </svg>
            </label>
            <button aria-label="全屏" className="ml-2.5 h-[18px] flex items-center">
                <svg width="16" height="16" viewBox="0 0 16 16" fill="none" stroke="#555">
                    <path d="M.5 3.500v-3h3M12.500.5h3v3M15.500 12.500v3h-3M3.500 15.500h-3v-3" />
                    <rect x="3.500" y="3.500" width="9" height="9" fill="#fff" stroke="#222" />
                    <path d="M5 6h6v4H5z" fill="#3a80c8" stroke="none" />
                </svg>
            </button>
            <button aria-label="折叠功能区" className="ml-3 h-[18px] flex items-center">
                <svg width="14" height="12" viewBox="0 0 14 12" fill="#fff" stroke="#222" strokeWidth="1.100">
                    <path d="M1 6l6-5 6 5-1 1.500-5-4-5 4zM1 10l6-5 6 5-1 1.500-5-4-5 4z" />
                </svg>
            </button>
            <button aria-label="帮助" className="ml-3 h-[18px] flex items-center">
                <span className="w-[14px] h-[14px] rounded-full bg-[#3f6fc8] text-white font-bold leading-[14px]">?</span>
            </button>
            <button className="ml-2.5 h-4 flex items-center gap-1 text-[#111]">
                <GraduationCap size={17} fill="#111" strokeWidth={1.5} />
                教程
            </button>
            <button aria-label="最小化" className="ml-2 w-[10px] h-[15px] border-b-2 border-[#111]" />
        </div>
    </header>
);

const Ribbon = () => (
    <div className="h-[86px] flex pl-[6px] bg-white border-b border-[#d9d9d9] overflow-hidden">
        <Divider />
        <Group title="视图" width="w-[232px]">
            <div className="ml-2 w-[33px] pt-1 flex flex-col gap-2">
                <button aria-label="新建图纸页" className="pl-1"><Icon name="newView" size={26} /></button>
                <button aria-label="基本视图" className="pl-1"><Icon name="baseView" size={26} /></button>
            </div>
            <Column names={['projView', 'detail', 'section']} />
            <Column names={['breakView', 'halfSec', 'breakout']} />
            <Column names={['revolved', 'cutA', 'cutB']} />
            <Column names={['cutC', 'isoCut', 'chevView']} />
            <BigButton icon="move" size={28} width="w-12">移动/复<br />制视图</BigButton>
            <Column names={['frame', 'update', 'align']} />
            <div className="flex items-end"><More /></div>
        </Group>
        <Divider />
        <Group title="尺寸" width="w-[154px]">
            <BigButton icon="rapid" size={30} width="ml-[5px] w-11">快速</BigButton>
            <Column names={['linear', 'angular', 'chamfer']} />
            <Column names={['curveDim', 'chord', 'radius']} />
            <Column names={['dimGray', 'diameter', 'thick']} />
            <Column names={['ordinate', 'baseDim', 'arcLen']} />
        </Group>
        <Divider />
        <Group title="注释" width="w-[166px]">
            <BigButton icon="note" size={30} width="ml-2 w-10">注释</BigButton>
            <Column names={['gdt', 'datum', 'zoomSym']} />
            <Column names={['balloon', 'surface', 'image']} />
            <Column names={['cross', 'offsetC', 'rough']} />
            <Column names={['target', 'hatch', 'paint']} />
            <More />
        </Group>
        <Divider />
        <Group title="草图" width="w-[51px]">
            <div className="ml-[7px] mt-[3px] w-6 h-[66px] flex flex-col border border-[#dcdcdc]">
                {['spline', 'rect', 'line'].map((n) => (
                    <button key={n} aria-label={n} className="h-[22px] flex items-center justify-center">
                        <Icon name={n} />
                    </button>
                ))}
            </div>
            <div className="ml-[2px] pt-[3px] flex flex-col">
                <button aria-label="向上" className="w-3 h-[22px] flex items-center justify-center text-[#999]"><Down className="rotate-180" /></button>
                <More label="向下" />
                <button aria-label="展开" className="w-3 h-[22px] flex flex-col items-center justify-center gap-[2px]">
                    <span className="w-[6px] h-px bg-[#111]" />
                    <Down />
                </button>
            </div>
        </Group>
        <Divider />
        <Group title="表" width="w-[75px]">
            <div className="w-2" />
            <Column names={['tabNote', 'partsList', 'tag']} />
            <Column names={['tabBalloon', 'tabLink', 'tagPlay']} />
            <div className="flex items-end"><More /></div>
        </Group>
        <Divider />
        <Group width="w-16">
            <BigButton icon="editStyle" size={31} width="w-full">编辑设置</BigButton>
        </Group>
        <Divider />
        <Group title="标准化工具 - G..." width="w-[103px]" left>
            <div className="pl-[3px] pt-[3px]">
                <Row names={['boxesGray', 'layers', 'layerSet', '|', 'chkBlue']} />
                <Row names={['chkGreen', 'chkGold', '|', 'pack']} />
            </div>
        </Group>
        <Divider />
        <Group title="制图工具 - GC工具箱" width="w-[322px]">
            <div className="pl-1 pt-[3px]">
                <Row names={['sheets', 'layerTab', 'findTab', 'editTab', 'oneTwo', '|', 'pack', '|', 'axes', '|', 'centre', 'findDim', 'findTol', 'editDim', 'xDim', 'abcDim']} />
                <Row names={['gridXY', 'triangle', 'gridTri', 'arrowA', 'cog', 'xyz', 'square', 'gridC', 'noteBox', 'brushDim', '|', 'gearsSet', 'gear', '|', 'spring']} />
            </div>
        </Group>
        <Divider />
        <Group title="尺寸快速格式化工具 - GC工具箱" width="w-[287px]">
            <div className="pl-1 pt-[3px]">
                <Row names={['baseDim', '|', 'f1', 'f2', 'f3', 'f4', 'f5', 'f6', 'f7', 'f8', 'f9', 'f10', 'f11']} />
                <Row names={['rPhi', 'rD', '|', 'dia1', 'dia2', 'back']} />
            </div>
        </Group>
        <Divider />
    </div>
);

const Picker = ({ label, value, width }) => (
    <div className={`grid items-center ${width}`}>
        <select aria-label={label} defaultValue={value} className="col-start-1 row-start-1 h-[17px] pl-px leading-[15px] appearance-none bg-white border border-[#a8a8a8]">
            <option>{value}</option>
        </select>
        <svg width="8" height="5" viewBox="0 0 8 5" className="col-start-1 row-start-1 justify-self-end mr-[5px] pointer-events-none">
            <path d="M0 0h8L4 4.500z" fill="#111" />
        </svg>
    </div>
);

const SelBtn = ({ icon, width = 'w-8' }) => (
    <button aria-label={icon} className={`h-[30px] flex items-center justify-center ${width}`}>
        <Icon name={icon} size={24} />
    </button>
);

const snaps = [
    ['snap', true], ['endPt', true], ['midPt', true], ['ctrlPt', false], ['pole', true], ['isect', false],
    ['arcCtr', true], ['quad', false], ['exist', true], ['onCurve', true], ['onFace', false],
];

const SelectionBar = () => {
    const [on, setOn] = useState(Object.fromEntries(snaps));

    return (
        <div className="h-[34px] flex items-center bg-white border-b border-[#7f8c93] overflow-hidden">
            <button className="w-[22px] flex items-center justify-end gap-[3px] pr-[6px] overflow-hidden">
                <span className="underline leading-4">M)</span>
                <Down className="shrink-0" />
            </button>
            <div className="w-px h-[26px] mr-3 bg-[#d4d4d4]" />
            <Picker label="类型过滤器" value="没有选择过滤器" width="w-[117px] mr-2" />
            <Picker label="选择范围" value="整个装配" width="w-[123px] mr-[5px]" />
            <SelBtn icon="undoFilter" />
            <SelBtn icon="filter" width="w-7" />
            <More />
            <SelBtn icon="reset" width="w-9" />
            <SelBtn icon="findTree" />
            <SelBtn icon="lasso" width="w-[34px]" />
            <More />
            <div className="flex gap-[2px]">
                {snaps.map(([n]) => (
                    <button
                        key={n}
                        aria-label={n}
                        aria-pressed={on[n]}
                        onClick={() => setOn({ ...on, [n]: !on[n] })}
                        className={`w-[31px] h-[30px] flex items-center justify-center border ${on[n] ? 'bg-[#c8d8d6] border-[#a6bfbb]' : 'border-transparent'}`}
                    >
                        <Icon name={n} size={24} />
                    </button>
                ))}
            </div>
            <div className="w-px h-[26px] ml-[7px] mr-2 bg-[#d4d4d4]" />
            <SelBtn icon="fitSel" />
            <SelBtn icon="pan" />
            <SelBtn icon="fit" width="w-[34px]" />
            <More />
            <SelBtn icon="orient" />
            <More />
            <div className="w-px h-[26px] ml-[6px] mr-1 bg-[#d4d4d4]" />
            <SelBtn icon="wrenchDim" width="w-[33px]" />
            <SelBtn icon="twoSheets" width="w-[33px]" />
            <SelBtn icon="wrenchTab" width="w-[33px]" />
            <SelBtn icon="sheetGray" width="w-[33px]" />
            <div className="w-px h-[26px] ml-[3px] bg-[#d4d4d4]" />
        </div>
    );
};

const Canvas = () => (
    <main className="flex-1 min-w-0 overflow-hidden bg-black border-t border-r-2 border-t-[#666] border-r-[#8a9094]">
        <svg className="w-full h-full block" fill="none" stroke="#fff">
            <g transform="translate(0 -145)">
                <path d="M0 154.500H249M312 154.500H2000M280.500 186V2000" />
                <path d="M331 373.500H605M457.500 370V469" />
                <path d="M427 370V472" stroke="#b4b4b4" strokeWidth="2" />
                <path d="M358 355v37l69-18.500zM527 355v37l-69-18.500z" fill="#fff" stroke="none" />
                <rect x="356.500" y="425.500" width="171" height="171" stroke="#f0963c" />
                <rect x="366" y="435" width="152.500" height="152" stroke="#d8d8d8" strokeWidth="1.500" />
                <rect x="947" y="435" width="153" height="152" stroke="#d8d8d8" strokeWidth="1.500" />
                <rect x="427" y="503" width="30.500" height="16" rx="8" stroke="#e4e4e4" strokeWidth="1.300" />
                <path
                    transform="translate(320 300) scale(.3333)"
                    stroke="#f40000"
                    strokeWidth="6"
                    strokeLinejoin="round"
                    d="M354 473l26-2 32-6 33-4 13 3 17 26 7 30 1 25-5 25-8 15-5 30-10 25-15 25-15 20-20 12-20 18-25 7-50 8-25-3-20-15-22-22-10-17-9-9-1-29 5-30 7-25 5-35 8-15 22-22 30-23 30-22 25-11 13 5 5 13 7 10"
                />
                <path d="M605 430.500h1M573 462.500h1M637 462.500h1M605 493.500h1" stroke="#aaa" />
                <text x="592" y="352" fill="#fff" stroke="none" fontSize="46" textAnchor="middle" fontFamily="Liberation Serif, serif">20</text>
            </g>
        </svg>
    </main>
);

const Tick = () => (
    <svg width="12" height="12" viewBox="0 0 12 12" className="shrink-0" aria-label="最新">
        <path d="M0 6.500L2 5l2.500 2.500Q7 3 10.500.5L12 1.500Q7.500 5.500 5 11.500H4Q2.500 8.500 0 6.500z" fill="#22c52e" stroke="#0e8a1c" strokeWidth=".7" />
    </svg>
);

const treeIcons = {
    drawings: (
        <g fill="#e4ebfb" stroke="#4a5688">
            <path d="M4.500 1.500h11v9h-11z" /><path d="M2.500 3.500h11v9h-11z" /><path d="M.5 5.500h11v9H.5z" /><path d="M7 11.500h4.500M9 11.500v3" />
        </g>
    ),
    sheet: (
        <g stroke="#6a78a8">
            <path d="M.5 2.500h14v11H.5z" fill="#e4ebfb" /><path d="M8.500 9.500h6v4h-6zM11.500 9.500v4M8.500 11.500h6" fill="#fff" />
        </g>
    ),
    imported: (
        <g stroke="#111" strokeWidth="1.200">
            <path d="M1 1h13v14H1zM4 1v14" fill="#d0d0d0" /><circle cx="11" cy="12" r="1.500" /><path d="M1 4h1M1 8h1M1 12h1" />
        </g>
    ),
    sketch: (
        <g stroke="#111" strokeWidth="1.300">
            <path d="M1.500 1.500h4v4h-4zM1.500 9.500h3v5h-3zM9 8.500H6.500v6h8v-5" /><path d="M8 10l5-6" stroke="#e0b040" strokeWidth="2" /><path d="M13 3.500l1.500-2" stroke={R} strokeWidth="2" />
        </g>
    ),
    projected: (
        <g>
            <path d="M1.500 1.500h12v5h-12z" stroke="#111" fill="#fff" /><circle cx="7.500" cy="4" r="1.500" stroke="#111" />
            <path d="M1.500 10.500h12v5h-12zM1.500 12.500h12" stroke="#d01818" fill="#fff" /><path d="M5.500 12v3M9.500 12v3" stroke="#d01818" />
            <path d="M1 8.500h13" stroke="#111" />
        </g>
    ),
    folder: (
        <g stroke="#8a6010">
            <path d="M.5 13V3.500h5l1 2h6V8" fill="#f8e08a" /><path d="M.5 14.500L4 8h12l-4 6.500z" fill="#f0b830" />
        </g>
    ),
};

const tree = [
    { level: 0, icon: 'drawings', text: '图纸', box: '-', mark: 'tick', guides: [] },
    { level: 1, icon: 'sheet', text: '图纸页 "...', box: '-', mark: 'tick', latest: true, color: 'text-[#f8484c]', guides: [0] },
    { level: 2, icon: 'imported', text: '导入...', box: '-', mark: 'tick', latest: true, selected: true, color: 'text-white', guides: [0, 1] },
    { level: 3, icon: 'sketch', text: '草...', mark: 'empty', color: 'text-[#3050f0]', guides: [0, 1, 2], elbow: true },
    { level: 2, icon: 'projected', text: '投影 ...', mark: 'tick', latest: true, guides: [0, 1], elbow: true },
    { level: 1, icon: 'folder', text: '过时', box: '+', mark: 'query', guides: [0] },
];

const Guides = ({ row, first }) => {
    const w = 21 + row.level * 19;
    const bx = 9.5 + row.level * 19;
    return (
        <svg width={w} height="20" viewBox={`0 0 ${w} 20`} fill="none" stroke="#999" className="shrink-0">
            <g strokeDasharray="1 1">
                {row.guides.map((g) => <path key={g} d={`M${9.5 + g * 19} 0v20`} />)}
                {row.box && <path d={`M${bx} ${first ? 10 : 0}V${row.box === '+' ? 10 : 20}M${bx} 10.500H${w - 1}`} />}
                {row.elbow && <path d={`M${bx} 0V10.500H${w - 1}`} />}
            </g>
            {row.box && (
                <>
                    <rect x={bx - 4} y="6.500" width="8" height="8" fill="#fff" stroke="#c0c0c0" />
                    <path d={`M${bx - 2.5} 10.500h5`} stroke="#111" />
                    {row.box === '+' && <path d={`M${bx} 8v5`} stroke="#111" />}
                </>
            )}
        </svg>
    );
};

const SortUp = () => (
    <svg width="10" height="5" viewBox="0 0 10 5" className="inline-block ml-[18px] mb-[2px]">
        <path d="M5 0l5 5H0z" fill="#111" />
    </svg>
);

const th = 'h-[21px] p-0 pl-[6px] pt-px text-left font-normal leading-[19px] bg-[#efefef] border-r border-b border-[#cfcfcf]';
const td = 'h-5 p-0 border-r border-b border-[#e8e8e8] overflow-hidden';

const NavigatorTree = () => (
    <div className="h-[150px] flex items-start border-t-2 border-[#dcdcdc] overflow-hidden">
        <table className="flex-1 table-fixed border-separate border-spacing-0 ml-px">
            <colgroup>
                <col className="w-[137px]" /><col className="w-[31px]" /><col className="w-10" /><col />
            </colgroup>
            <thead>
                <tr>
                    <th className={th}>名称<SortUp /></th>
                    <th className={th}>最..</th>
                    <th className={th}>附注</th>
                    <th className="bg-[#efefef] border-b border-[#cfcfcf]" aria-label="空" />
                </tr>
            </thead>
            <tbody>
                {tree.map((row, i) => (
                    <tr key={row.text} className="odd:bg-white even:bg-[#f9f9f9]">
                        <td className={td}>
                            <div className="h-[19px] flex items-center whitespace-nowrap overflow-hidden">
                                <Guides row={row} first={i === 0} />
                                {row.mark === 'tick' && <Tick />}
                                {row.mark === 'empty' && <input type="checkbox" aria-label={row.text} className="appearance-none w-2 h-2 ml-[2px] mr-[2px] border border-[#888] bg-white" />}
                                {row.mark === 'query' && (
                                    <svg width="12" height="15" viewBox="0 0 12 15" fill="none" className="shrink-0" aria-label="未知">
                                        <path d="M3 5q0-3 3-3t3 3-3 3v2M6 12v2" stroke="#6a6000" strokeWidth="3.600" />
                                        <path d="M3 5q0-3 3-3t3 3-3 3v2M6 12v2" stroke="#f8e820" strokeWidth="2" />
                                    </svg>
                                )}
                                <svg width="16" height="16" viewBox="0 0 16 16" fill="none" className="ml-[2px] shrink-0">{treeIcons[row.icon]}</svg>
                                <span className={`flex-1 pl-[3px] h-[19px] leading-[19px] ${row.color || 'text-[#111]'} ${row.selected ? 'bg-[#3399ff]' : ''}`}>{row.text}</span>
                            </div>
                        </td>
                        <td className={`${td} pl-[6px] ${row.selected ? 'bg-[#3399ff]' : ''}`}>{row.latest && <Tick />}</td>
                        <td className={`${td} ${row.selected ? 'bg-[#3399ff]' : ''}`} />
                        <td className="border-b border-[#e8e8e8]" />
                    </tr>
                ))}
                <tr className="bg-white">
                    <td className={td}>
                        <svg width="110" height="19" viewBox="0 0 110 19" fill="none" stroke="#333">
                            <path d="M9.500 0v19" stroke="#999" strokeDasharray="1 1" />
                            <path d="M27 4.500h7" stroke="#2a1a80" strokeWidth="1.500" />
                            <path d="M40 4.500h8M53 4.500h3M62 4.500h7M74 4.500h4M84 4.500h2M92 4.500h4" />
                        </svg>
                    </td>
                    <td className={td} /><td className={td} />
                    <td className="border-b border-[#e8e8e8]" />
                </tr>
            </tbody>
        </table>
        <div className="w-[6px] self-stretch pt-[39px] bg-[#f0f0f0] border-l border-[#dcdcdc] overflow-hidden">
            <div className="w-4 h-12 pt-[19px] bg-[#e8e8e8] border border-[#999] flex flex-col gap-[2px]">
                <span className="h-px ml-[3px] bg-[#333]" /><span className="h-px ml-[3px] bg-[#333]" /><span className="h-px ml-[3px] bg-[#333]" />
            </div>
        </div>
    </div>
);

const SectionTitle = ({ children }) => (
    <h3 className="h-6 pl-[6px] flex items-center justify-between text-sm leading-5 text-[#2e86b8]">
        {children}
        <svg width="2" height="8" viewBox="0 0 2 8" fill="none" stroke="#2e86b8" aria-hidden="true"><path d="M0 .5h2M1.500 0v8M0 7.500h2" /></svg>
    </h3>
);

const Details = () => (
    <div className="h-[229px] ml-[6px] mt-1 pl-px border border-r-0 border-[#d4d4d4] overflow-hidden">
        <table className="w-full table-fixed border-separate border-spacing-0">
            <colgroup>
                <col className="w-16" /><col className="w-10" /><col className="w-[88px]" /><col />
            </colgroup>
            <thead>
                <tr>
                    <th className={th}>参数</th>
                    <th className={th}>值</th>
                    <th className={th}>表达式<SortUp /></th>
                    <th className="bg-[#efefef] border-b border-[#cfcfcf]" aria-label="空" />
                </tr>
            </thead>
            <tbody>
                {[...Array(11).keys()].map((i) => (
                    <tr key={i} className="odd:bg-white even:bg-[#f9f9f9]">
                        <td className={td} /><td className={td} /><td className={td} />
                        <td className="border-b border-[#e8e8e8]" />
                    </tr>
                ))}
            </tbody>
        </table>
    </div>
);

const Navigator = () => (
    <aside className="w-[322px] shrink-0 pl-[9px] bg-white overflow-hidden">
        <h2 className="h-7 pt-px pl-[3px] flex items-center gap-[11px] text-[#111]">
            <span className="w-3 h-[11px] border border-t-2 border-[#111]" />
            部件导航器
        </h2>
        <div className="border-l border-[#dcdcdc]">
            <NavigatorTree />
            <div className="h-[5px] bg-[#dcdcdc] border-y border-[#b0b0b0]" />
            <div className="h-[22px]"><SectionTitle>相依性</SectionTitle></div>
            <div className="border-t-2 border-[#d4d4d4]">
                <SectionTitle>细节</SectionTitle>
                <Details />
            </div>
            <div className="mt-[6px] border-t-2 border-[#dcdcdc]">
                <SectionTitle>预览</SectionTitle>
                <div className="ml-[39px] mr-[26px] mt-[3px] h-[184px] flex items-center justify-center border border-[#dcdcdc] text-[#111]">
                    没有可用的预览
                </div>
            </div>
        </div>
    </aside>
);

const App = () => {
    const [tab, setTab] = useState('主页');

    return (
        <div className="relative h-screen flex flex-col overflow-hidden bg-white text-xs text-[#111] font-['Liberation_Sans','Noto_Sans_CJK_SC',sans-serif]">
            <TopBar active={tab} onChange={setTab} />
            <Ribbon />
            <SelectionBar />
            <div className="flex-1 min-h-0 flex">
                <Canvas />
                <Navigator />
            </div>
            <p className="absolute right-[3px] bottom-0 text-[15px] leading-6 font-light text-[#444] whitespace-nowrap font-['Liberation_Mono','Noto_Sans_CJK_SC',monospace]">UG爱好者论坛@猫南北</p>
        </div>
    );
};

export default App;
